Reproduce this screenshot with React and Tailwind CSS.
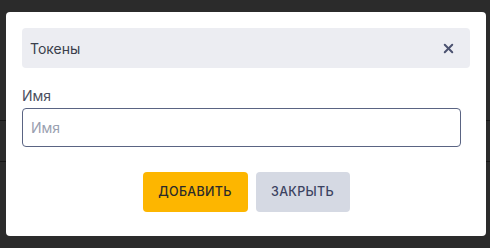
import { X } from 'lucide-react'

export default function App() {
  return (
    <div className="relative w-[490px] h-[248px] overflow-hidden bg-[#2b2b2b]" style={{ fontFamily: 'Inter, "Noto Sans", sans-serif' }}>
      {/* table rows behind the overlay */}
      <div className="pt-[120px]">
        <div className="h-px bg-[#161616]" />
        <div className="h-[40px]" />
        <div className="h-px bg-[#161616]" />
      </div>

      <div className="absolute left-[6px] top-[12px] w-[480px] h-[224px] bg-white rounded-[4px] p-4 flex flex-col">
        <div className="h-10 bg-[#ecedf2] rounded-[4px] flex items-center justify-between pl-2 pr-[14px]">
          <span className="text-[14px] text-[#3a3f4c]">Токены</span>
          <X size={15} strokeWidth={3.2} className="text-[#4b5270]" />
        </div>

        <label className="mt-[18px] text-[14px] leading-5 text-[#4b5060]">Имя</label>
        <input
          placeholder="Имя"
          className="mt-[2px] w-[439px] h-[39px] border border-[#5a6483] rounded-[4px] px-2 text-[14px] text-[#333] placeholder:text-[#9aa0b0] outline-none"
        />

        <div className="mt-[25px] flex justify-center gap-2">
          <button className="h-10 w-[105px] rounded-[4px] bg-[#fdb600] text-[12.5px] font-medium tracking-[0.3px] text-[#2a2a2a]">
            ДОБАВИТЬ
          </button>
          <button className="h-10 w-[94px] rounded-[4px] bg-[#d5d9e3] text-[12.5px] font-medium tracking-[0.3px] text-[#3b4260]">
            ЗАКРЫТЬ
          </button>
        </div>
      </div>
    </div>
  )
}
